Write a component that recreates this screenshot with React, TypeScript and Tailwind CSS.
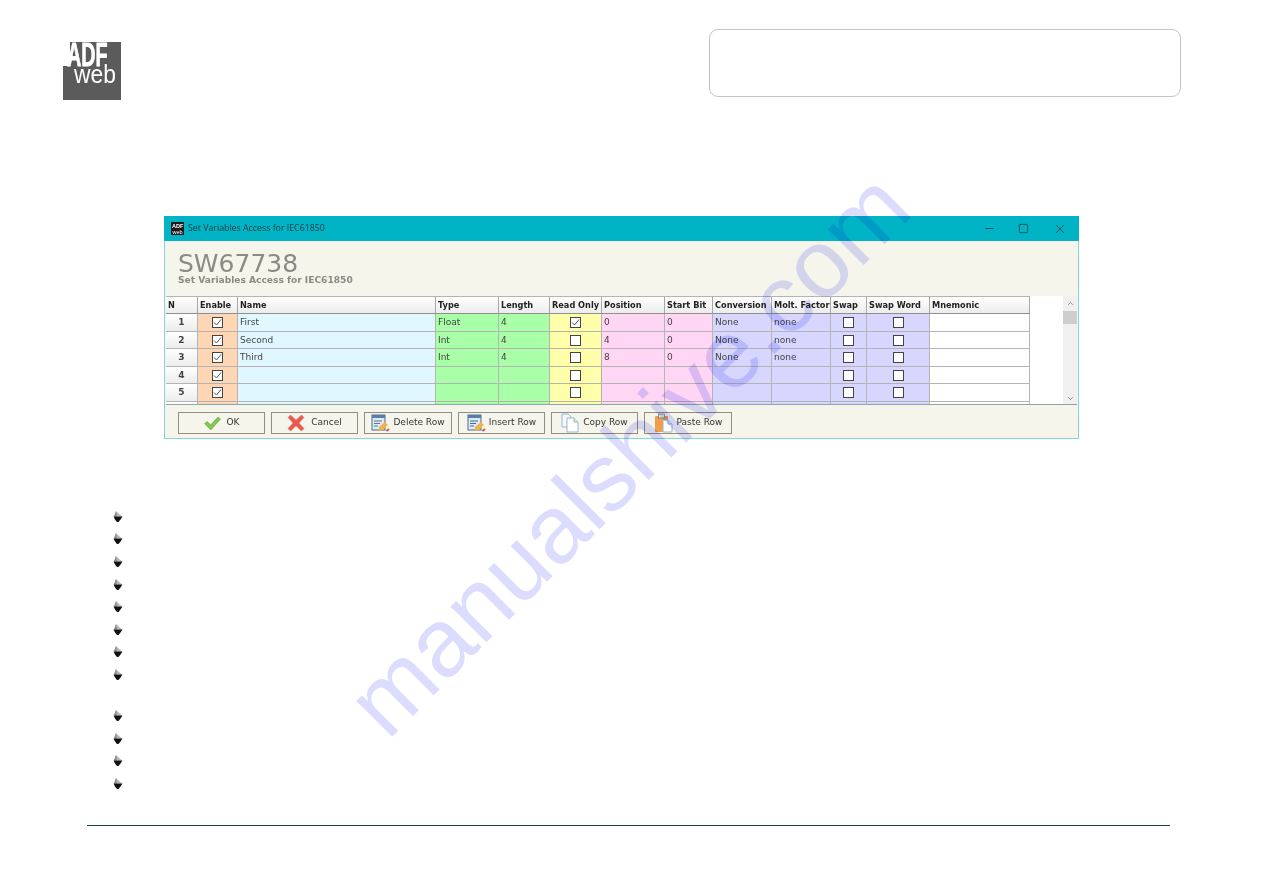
import React from "react";
import { Minus, Square, X, ChevronUp, ChevronDown } from "lucide-react";

const gridCols =
  "grid grid-cols-[32px_40px_198px_63px_51px_52px_63px_48px_59px_59px_36px_63px_100px]";

const headers = [
  "N",
  "Enable",
  "Name",
  "Type",
  "Length",
  "Read Only",
  "Position",
  "Start Bit",
  "Conversion",
  "Molt. Factor",
  "Swap",
  "Swap Word",
  "Mnemonic",
];

interface Row {
  n: number;
  enable: boolean;
  name: string;
  type: string;
  length: string;
  readOnly: boolean;
  position: string;
  startBit: string;
  conversion: string;
  factor: string;
}

const rows: Row[] = [
  { n: 1, enable: true, name: "First", type: "Float", length: "4", readOnly: true, position: "0", startBit: "0", conversion: "None", factor: "none" },
  { n: 2, enable: true, name: "Second", type: "Int", length: "4", readOnly: false, position: "4", startBit: "0", conversion: "None", factor: "none" },
  { n: 3, enable: true, name: "Third", type: "Int", length: "4", readOnly: false, position: "8", startBit: "0", conversion: "None", factor: "none" },
  { n: 4, enable: true, name: "", type: "", length: "", readOnly: false, position: "", startBit: "", conversion: "", factor: "" },
  { n: 5, enable: true, name: "", type: "", length: "", readOnly: false, position: "", startBit: "", conversion: "", factor: "" },
  { n: 6, enable: true, name: "", type: "", length: "", readOnly: false, position: "", startBit: "", conversion: "", factor: "" },
];

// bullets sit on a steady pitch, the 8th one has a wrapped (blank) line under it
const bulletCount = 12;

const Logo = () => (
  <svg width="58" height="58" viewBox="0 0 58 58" className="mt-[13px] shrink-0">
    <path d="M7 0H58V58H0V24H7Z" fill="#5b5b5b" />
    <text
      transform="translate(4 24) scale(0.6 1)"
      fill="#fff"
      stroke="#fff"
      strokeWidth="0.8"
      fontSize="33"
      fontWeight="700"
      fontFamily="'Liberation Sans', sans-serif"
    >
      ADF
    </text>
    <text
      transform="translate(11 41) scale(0.88 1)"
      fill="#fff"
      fontSize="26"
      fontFamily="'Liberation Sans', sans-serif"
    >
      web
    </text>
  </svg>
);

const TitleIcon = () => (
  <svg width="13" height="13" viewBox="0 0 13 13" className="shrink-0">
    <rect width="13" height="13" fill="#1a1a1a" />
    <text x="1" y="6" fill="#fff" fontSize="5.5" fontWeight="700" fontFamily="'Liberation Sans', sans-serif">
      ADF
    </text>
    <text x="1.5" y="12" fill="#fff" fontSize="5.5" fontFamily="'Liberation Sans', sans-serif">
      web
    </text>
  </svg>
);

const Check = ({ on }: { on: boolean }) => (
  <span className="flex size-[11px] items-center justify-center border border-[#444] bg-white">
    {on && (
      <svg width="9" height="9" viewBox="0 0 9 9">
        <path d="M1 4.5 3.5 7 8 1.5" fill="none" stroke="#555" strokeWidth="1" />
      </svg>
    )}
  </span>
);

const OkIcon = () => (
  <svg width="17" height="15" viewBox="0 0 17 15">
    <path d="M0.5 7.5 3.5 5.5 6.5 9 14 1 16.5 3 6.8 14 Z" fill="#7fc653" stroke="#6aa545" strokeWidth="0.6" />
  </svg>
);

const CancelIcon = () => (
  <svg width="18" height="18" viewBox="0 0 18 18">
    <path d="M1 3.5 3.5 1 9 6 14.5 1 17 3.5 12 9 17 14.5 14.5 17 9 12 3.5 17 1 14.5 6 9Z" fill="#e8594f" stroke="#d9796f" strokeWidth="0.5" />
  </svg>
);

const NoteIcon = ({ plus }: { plus?: boolean }) => (
  <svg width="19" height="19" viewBox="0 0 19 19">
    <rect x="1" y="1" width="13" height="15" fill="#dfe9f4" stroke="#4a6a8c" />
    <rect x="1" y="1" width="13" height="3" fill="#5b7fa6" />
    <path d="M3 7H11M3 9.5H9M3 12H7" stroke={plus ? "#3a6ea5" : "#607890"} strokeWidth="1" />
    <path d="M8 13 14 8 17 11 11 16.5 8 17Z" fill="#efb34a" />
    <path d="M15.5 17 18 15" stroke="#d2524a" strokeWidth="2" />
  </svg>
);

const CopyIcon = () => (
  <svg width="19" height="20" viewBox="0 0 19 20">
    <path d="M1 1H7L10 4V14H1Z" fill="#f4f8fc" stroke="#9db4cc" />
    <path d="M6 5H13L17 9V19H6Z" fill="#fff" stroke="#9db4cc" />
    <path d="M13 5V9H17" fill="#dce8f3" stroke="#9db4cc" />
  </svg>
);

const PasteIcon = () => (
  <svg width="20" height="20" viewBox="0 0 20 20">
    <rect x="1" y="3" width="13" height="16" rx="1" fill="#ed9f4b" />
    <rect x="4.5" y="1" width="6" height="4" fill="#e8e4d8" stroke="#77736a" strokeWidth="0.7" />
    <path d="M9 7H14L18 11V19H9Z" fill="#fff" stroke="#9db4cc" />
    <path d="M14 7V11H18" fill="#dce8f3" stroke="#9db4cc" />
  </svg>
);

const Bullet = () => (
  <svg width="10" height="11" viewBox="0 0 10 11">
    <path d="M3 0 9 5.5H1Z" fill="#b8b8b8" />
    <path d="M3 0 4 5.5H1Z" fill="#8a8a8a" />
    <path d="M0.5 5.5H9.5L7.5 8.5 5.5 11 4 11 2 8.5Z" fill="#111" />
  </svg>
);

const buttons = [
  { label: "OK", icon: <OkIcon />, width: "w-[87px]", gap: "gap-[6px]" },
  { label: "Cancel", icon: <CancelIcon />, width: "w-[87px]", gap: "gap-[6px]" },
  { label: "Delete Row", icon: <NoteIcon />, width: "w-[88px]", gap: "gap-[3px]" },
  { label: "Insert Row", icon: <NoteIcon plus />, width: "w-[87px]", gap: "gap-[3px]" },
  { label: "Copy Row", icon: <CopyIcon />, width: "w-[87px]", gap: "gap-[3px]" },
  { label: "Paste Row", icon: <PasteIcon />, width: "w-[88px]", gap: "gap-[3px]" },
];

const cellBase =
  "flex items-center overflow-hidden whitespace-nowrap border-r border-b border-[#b4b4b4] px-[2px] pt-px text-[9px] text-[#444]";

const App: React.FC = () => {
  return (
    <div
      className="relative h-[893px] w-[1263px] overflow-hidden bg-white"
      style={{ fontFamily: "'DejaVu Sans', sans-serif" }}
    >
      {/* Page header */}
      <header className="flex items-start justify-between pl-[63px] pr-[82px] pt-[29px]">
        <Logo />
        <div className="h-[68px] w-[472px] rounded-[9px] border border-[#c4c4c4]" />
      </header>

      {/* Dialog */}
      <section className="ml-[164px] mt-[116px] flex h-[223px] w-[915px] flex-col border border-[#86d5d8] bg-[#f5f5ec]">
        <div className="-mx-px -mt-px flex h-[25px] shrink-0 items-center bg-[#00b4c5] pl-[7px]">
          <TitleIcon />
          <span className="ml-[4px] text-[8.8px] text-[#1d3a40] font-['Open_Sans',sans-serif]">
            Set Variables Access for IEC61850
          </span>
          <div className="ml-auto flex items-center text-[#111]">
            <Minus size={13} strokeWidth={1.1} className="mr-[22px]" />
            <Square size={11} strokeWidth={1.2} className="mr-[24px]" />
            <X size={14} strokeWidth={1} className="mr-[12px]" />
          </div>
        </div>

        <div className="flex h-[55px] shrink-0 flex-col pl-[13px] pt-[10px]">
          <div className="text-[25px] leading-[25px] text-[#8b8b83]">SW67738</div>
          <div className="text-[9.1px] font-bold leading-[9px] text-[#8b8b83]">
            Set Variables Access for IEC61850
          </div>
        </div>

        {/* Table */}
        <div className="ml-px mr-px flex h-[109px] shrink-0 border-b border-[#8ca5a8] bg-white">
          <div className="w-[864px] shrink-0 overflow-hidden">
            <div className={`${gridCols} h-[18px] border-b border-t border-[#909090] border-t-[#b4b4b4] bg-gradient-to-b from-white to-[#ececec]`}>
              {headers.map((h) => (
                <div
                  key={h}
                  className="flex items-center overflow-hidden whitespace-nowrap border-r border-[#a8a8a8] px-[2px] pt-px text-[8.2px] font-bold text-[#222]"
                >
                  {h}
                </div>
              ))}
            </div>
            <div className="h-[91px] overflow-hidden">
              {rows.map((r) => (
                <div key={r.n} className={`${gridCols} h-[17.5px]`}>
                  <div className={`${cellBase} justify-center bg-gradient-to-b from-white to-[#ececec] font-bold text-[#222]`}>
                    {r.n}
                  </div>
                  <div className={`${cellBase} justify-center bg-[#ffd6b3]`}>
                    <Check on={r.enable} />
                  </div>
                  <div className={`${cellBase} bg-[#e1f7ff]`}>{r.name}</div>
                  <div className={`${cellBase} bg-[#a8ffa8]`}>{r.type}</div>
                  <div className={`${cellBase} bg-[#a8ffa8]`}>{r.length}</div>
                  <div className={`${cellBase} justify-center bg-[#ffffab]`}>
                    <Check on={r.readOnly} />
                  </div>
                  <div className={`${cellBase} bg-[#ffd6f3]`}>{r.position}</div>
                  <div className={`${cellBase} bg-[#ffd6f3]`}>{r.startBit}</div>
                  <div className={`${cellBase} bg-[#d6d6ff]`}>{r.conversion}</div>
                  <div className={`${cellBase} bg-[#d6d6ff]`}>{r.factor}</div>
                  <div className={`${cellBase} justify-center bg-[#d6d6ff]`}>
                    <Check on={false} />
                  </div>
                  <div className={`${cellBase} justify-center bg-[#d6d6ff]`}>
                    <Check on={false} />
                  </div>
                  <div className={`${cellBase} bg-white`} />
                </div>
              ))}
            </div>
          </div>
          <div className="flex-1" />
          <div className="flex w-[14px] shrink-0 flex-col items-center bg-[#f0f0f0]">
            <ChevronUp size={9} strokeWidth={1.6} className="mt-[3px] text-[#555]" />
            <div className="mt-[3px] h-[13px] w-full bg-[#cdcdcd]" />
            <ChevronDown size={9} strokeWidth={1.6} className="mb-px mt-auto text-[#555]" />
          </div>
        </div>

        {/* Buttons */}
        <div className="flex flex-1 items-start gap-[6px] pl-[13px] pt-[7px]">
          {buttons.map((b) => (
            <button
              key={b.label}
              className={`flex h-[22px] ${b.width} ${b.gap} items-center justify-center overflow-hidden border border-[#8f8f86] bg-[#f5f5ec] text-[9px] text-[#333]`}
            >
              {b.icon}
              <span>{b.label}</span>
            </button>
          ))}
        </div>
      </section>

      {/* Bullets, their text is blanked in the source page */}
      <ul className="ml-[113px] mt-[66px] flex flex-col">
        {Array.from({ length: bulletCount }).map((_, i) => (
          <li key={i} className={`flex h-[22.6px] items-center ${i === 7 ? "mb-[18.4px]" : ""}`}>
            <Bullet />
          </li>
        ))}
      </ul>

      {/* Footer rule */}
      <div className="ml-[87px] mt-[30px] h-px w-[1083px] bg-[#1c3a5c]" />

      {/* Watermark */}
      <div
        className="pointer-events-none absolute left-[398px] top-[656px] origin-bottom-left -rotate-45 whitespace-nowrap text-[96px] leading-none text-[#dcdcff] mix-blend-multiply"
        style={{ fontFamily: "'Liberation Sans', sans-serif" }}
      >
        manualshive.com
      </div>
    </div>
  );
};

export default App;
